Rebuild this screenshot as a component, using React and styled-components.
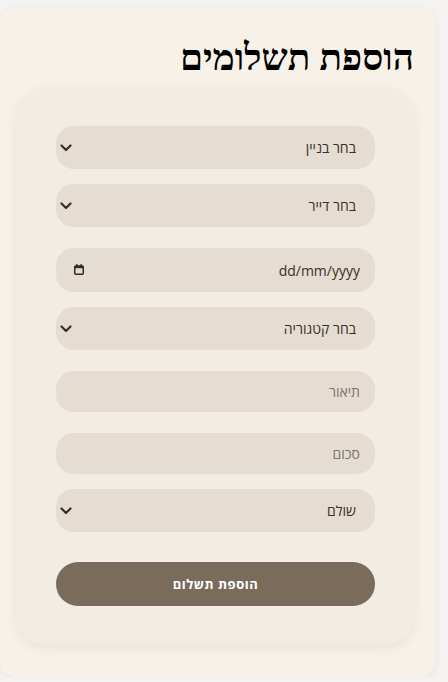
import React from "react";
import styled, { createGlobalStyle } from "styled-components";

const GlobalStyle = createGlobalStyle`
  body {
    margin: 0;
    background-color: #f4f3f1;
    font-family: "Open Sans", "Liberation Sans", Arial, sans-serif;
  }
`;

const chevron =
  "data:image/svg+xml;utf8," +
  encodeURIComponent(
    '<svg xmlns="http://www.w3.org/2000/svg" width="12" height="8" viewBox="0 0 12 8"><path d="M1.5 1.5 L6 6 L10.5 1.5" fill="none" stroke="#3a2f26" stroke-width="2.2" stroke-linecap="round" stroke-linejoin="round"/></svg>'
  );

const OuterCard = styled.div`
  box-sizing: border-box;
  width: 435px;
  height: 670px;
  margin-top: 7px;
  padding: 29px 20px 0 0;
  background-color: #f8f1e8;
  border-radius: 16px;
  box-shadow: 0 2px 8px rgba(0, 0, 0, 0.06);
  direction: rtl;
`;

const Title = styled.h2`
  margin: 0 1px 7px 0;
  font-family: "Liberation Serif", "Times New Roman", serif;
  font-size: 37px;
  font-weight: bold;
  color: #000;
  line-height: 44px;
`;

const FormCard = styled.form`
  box-sizing: border-box;
  width: 399px;
  padding: 39px 40px 39px;
  background-color: #f3ece5;
  border-radius: 30px;
  box-shadow: 0 4px 12px rgba(0, 0, 0, 0.06);
  display: flex;
  flex-direction: column;
`;

const Select = styled.select`
  box-sizing: border-box;
  width: 100%;
  height: 43px;
  margin-bottom: ${(p) => p.$gap}px;
  padding: 0 19px 0 30px;
  border: none;
  border-radius: 18px;
  appearance: none;
  background: #e5ddd2 url("${chevron}") no-repeat left 4px center;
  color: #3a2f26;
  font-family: "Open Sans", "Liberation Sans", Arial, sans-serif;
  font-size: 14px;
  direction: rtl;
  outline: none;
`;

const Input = styled.input`
  box-sizing: border-box;
  width: 100%;
  height: ${(p) => p.$h || 41}px;
  margin-bottom: ${(p) => p.$gap}px;
  padding: 0 15px;
  border: none;
  border-radius: 18px;
  background-color: #e5ddd2;
  color: #3a2f26;
  font-family: "Open Sans", "Liberation Sans", Arial, sans-serif;
  font-size: 14px;
  direction: rtl;
  outline: none;

  &::placeholder {
    color: #7a746e;
  }
`;

const DateField = styled.div`
  position: relative;
  margin-bottom: ${(p) => p.$gap}px;
`;

const DateInput = styled(Input)`
  margin-bottom: 0;
  direction: ltr;
  text-align: right;

  &::placeholder {
    color: #3a2f26;
  }
`;

const CalendarIcon = styled.svg`
  position: absolute;
  left: 18px;
  top: 16px;
  pointer-events: none;
`;

const SubmitButton = styled.button`
  box-sizing: border-box;
  width: 100%;
  height: 44px;
  border: none;
  border-radius: 22px;
  background-color: #7a6b5b;
  color: #fff;
  font-family: "Open Sans", "Liberation Sans", sans-serif;
  font-size: 13px;
  font-weight: bold;
  letter-spacing: 0.5px;
  cursor: pointer;
`;

export default function App() {
  return (
    <>
      <GlobalStyle />
      <OuterCard>
        <Title>הוספת תשלומים</Title>
        <FormCard onSubmit={(e) => e.preventDefault()}>
          <Select $gap={15} defaultValue="">
            <option value="">בחר בניין</option>
          </Select>
          <Select $gap={21} defaultValue="">
            <option value="">בחר דייר</option>
          </Select>
          <DateField $gap={15}>
            <DateInput type="text" placeholder="dd/mm/yyyy" $h={44} />
            <CalendarIcon width="10" height="11" viewBox="0 0 10 11">
              <rect x="0.75" y="2" width="8.5" height="8.25" rx="1" fill="none" stroke="#2b2b2b" strokeWidth="1.5" />
              <rect x="0.75" y="2" width="8.5" height="2.2" fill="#2b2b2b" />
              <line x1="2.8" y1="0" x2="2.8" y2="2.5" stroke="#2b2b2b" strokeWidth="1.3" />
              <line x1="7.2" y1="0" x2="7.2" y2="2.5" stroke="#2b2b2b" strokeWidth="1.3" />
            </CalendarIcon>
          </DateField>
          <Select $gap={21} defaultValue="">
            <option value="">בחר קטגוריה</option>
          </Select>
          <Input type="text" placeholder="תיאור" $gap={21} />
          <Input type="text" inputMode="numeric" placeholder="סכום" $gap={15} />
          <Select $gap={30} defaultValue="paid">
            <option value="paid">שולם</option>
            <option value="unpaid">לא שולם</option>
          </Select>
          <SubmitButton type="submit">הוספת תשלום</SubmitButton>
        </FormCard>
      </OuterCard>
    </>
  );
}
